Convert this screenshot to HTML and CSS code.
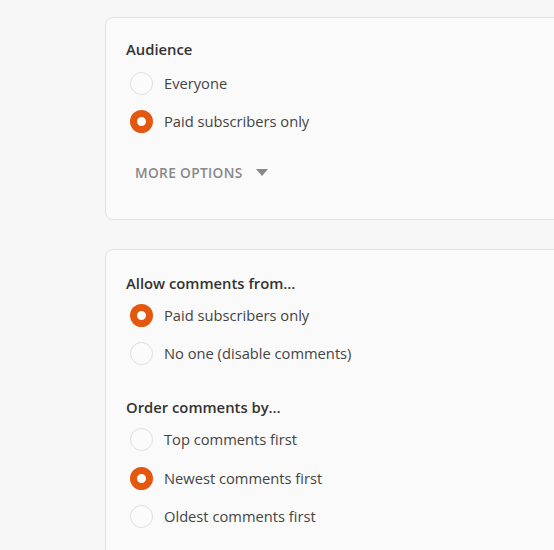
FILE: index.html
```html
<!DOCTYPE html>
<html>
<head>
<meta charset="utf-8">
<link rel="stylesheet" href="styles.css">
</head>
<body>
<div class="page">
  <section class="card card-audience">
    <h3 class="heading">Audience</h3>
    <div class="group group-first">
      <label class="row"><span class="radio"></span><span class="label">Everyone</span></label>
      <label class="row"><span class="radio checked"></span><span class="label">Paid subscribers only</span></label>
    </div>
    <div class="more">
      <span>MORE OPTIONS</span>
      <svg class="caret" width="12" height="7" viewBox="0 0 12 7"><path d="M0 0 H12 L6 7 Z" fill="#888"/></svg>
    </div>
  </section>
  <section class="card card-comments">
    <h3 class="heading">Allow comments from…</h3>
    <div class="group">
      <label class="row"><span class="radio checked"></span><span class="label">Paid subscribers only</span></label>
      <label class="row"><span class="radio"></span><span class="label">No one (disable comments)</span></label>
    </div>
    <h3 class="heading heading-second">Order comments by…</h3>
    <div class="group">
      <label class="row"><span class="radio"></span><span class="label">Top comments first</span></label>
      <label class="row row-tall"><span class="radio checked"></span><span class="label">Newest comments first</span></label>
      <label class="row"><span class="radio"></span><span class="label">Oldest comments first</span></label>
    </div>
  </section>
</div>
</body>
</html>
```
FILE: styles.css
```css
html, body {
  margin: 0;
  padding: 0;
  background: #f7f7f7;
  overflow: hidden;
  font-family: "Open Sans", "Noto Sans", sans-serif;
}
.page {
  padding: 17px 0 0 105px;
  display: flex;
  flex-direction: column;
  gap: 29px;
  width: 700px;
}
.card {
  background: #fafafa;
  border: 1px solid #e3e3e3;
  border-radius: 8px;
  padding: 0 20px;
}
.card-audience {
  padding-top: 21px;
  padding-bottom: 37px;
}
.card-comments {
  padding-top: 23px;
  padding-bottom: 40px;
}
.heading {
  margin: 0;
  font-size: 14.8px;
  line-height: 20px;
  font-weight: 600;
  color: #333;
}
.heading-second {
  margin-top: 25px;
}
.group {
  display: flex;
  flex-direction: column;
  margin-top: 3px;
}
.group-first {
  margin-top: 5px;
}
.row {
  display: flex;
  align-items: center;
  height: 38px;
  padding-left: 4px;
}
.row-tall {
  height: 39px;
  padding-top: 1px;
  box-sizing: border-box;
}
.radio {
  width: 23px;
  height: 23px;
  box-sizing: border-box;
  border-radius: 50%;
  border: 1px solid #dedede;
  background: #fbfbfb;
  flex: none;
}
.radio.checked {
  border: 7.5px solid #e4570f;
  background: #fff;
}
.label {
  margin-left: 11px;
  font-size: 14.7px;
  color: #444;
}
.more {
  margin-top: 22px;
  height: 20px;
  display: flex;
  align-items: center;
  padding-left: 9px;
  font-size: 13.7px;
  font-weight: 600;
  letter-spacing: 0.35px;
  color: #888;
}
.caret {
  margin-left: 13px;
}
```
